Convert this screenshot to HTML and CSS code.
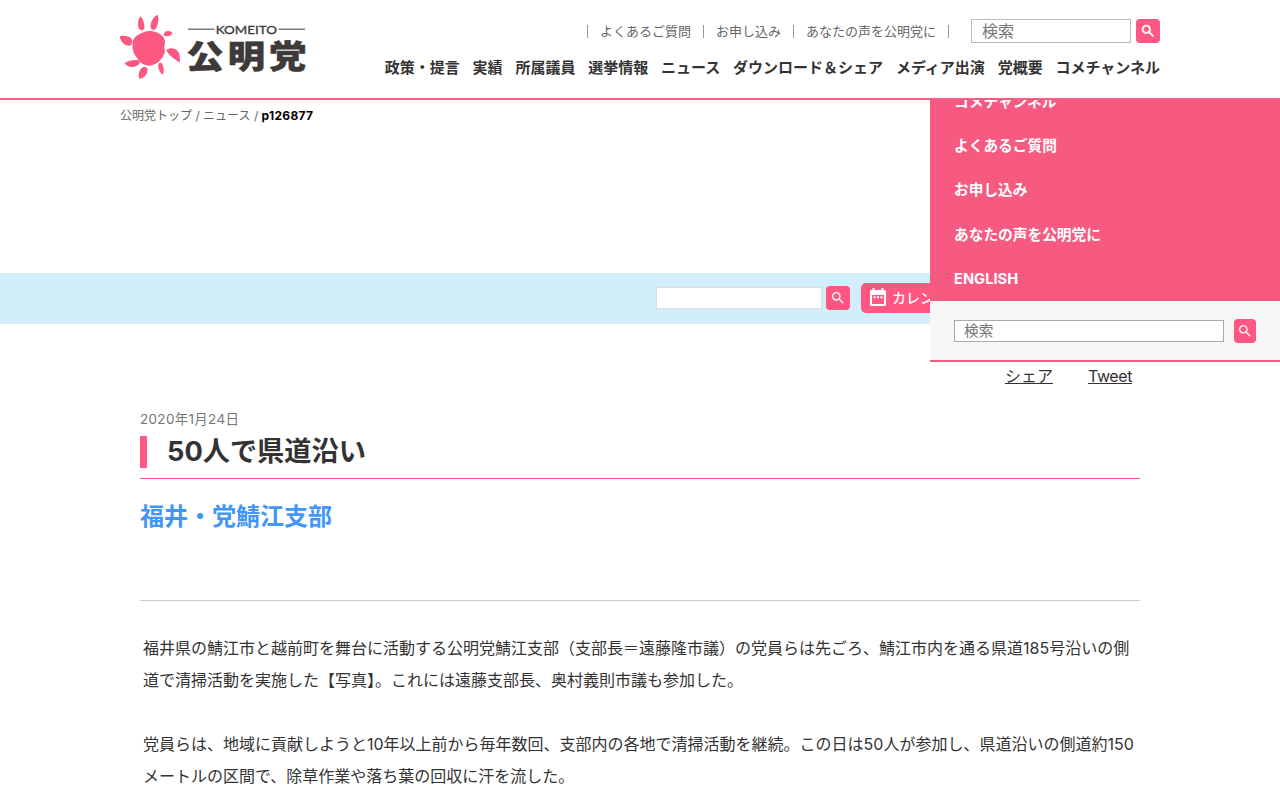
FILE: index.html
```html
<!DOCTYPE html>
<html lang="ja">
<head>
    <meta charset="UTF-8">
    <title>50人で県道沿い | 公明党</title>
    <link rel="stylesheet" href="styles.css">
</head>
<body>
    <!-- Header -->
    <header class="header">
        <div class="header-inner">
            <a href="#" class="logo">
                <svg width="186" height="66" viewBox="30 27 558 198">
                    <g fill="#fc5882" transform="translate(15 15)">
                        <path d="M102 63C118 62 134 69 144 80C152 89 151 101 147 112C151 120 151 129 145 137C139 150 123 165 103 167C86 166 74 157 66 143C55 131 51 115 53 98C54 85 66 75 78 70C86 66 93 63 102 63Z"/>
                        <path d="M76 19C83 24 89 40 88 55C84 64 76 63 71 55C67 43 69 28 76 19Z"/>
                        <path d="M128 14C133 26 129 45 122 56C117 62 109 61 107 52C105 38 114 20 128 14Z"/>
                        <path d="M172 70C170 78 158 80 149 78C144 74 148 66 155 64C162 62 169 64 172 70Z"/>
                        <path d="M154 120C163 113 178 112 186 121C195 131 196 146 194 158C182 149 160 137 154 120Z"/>
                        <path d="M130 162C136 156 142 158 143 166C147 176 148 186 143 194C134 188 128 174 130 162Z"/>
                        <path d="M98 177C98 190 90 203 75 207C69 202 70 188 77 177C83 169 94 170 98 177Z"/>
                        <path d="M75 156C72 167 60 172 47 171C39 170 32 165 29 159C39 152 52 149 64 150C70 150 74 152 75 156Z"/>
                        <path d="M14 79C26 75 43 78 50 86C54 94 51 103 45 107C31 110 17 97 14 79Z"/>
                    </g>
                    <path d="M234 72.5H313M506 72.5H585" stroke="#3e3a39" stroke-width="3"/>
                    <text class="logo-en" x="317" y="87" textLength="184" lengthAdjust="spacingAndGlyphs">KOMEITO</text>
                    <text class="logo-ja" x="229 353 477" y="0" transform="translate(0 189) scale(1 .86)">公明党</text>
                </svg>
            </a>
            <div class="header-right">
                <div class="header-sub">
                    <ul class="sub-nav">
                        <li><a href="#">よくあるご質問</a></li>
                        <li><a href="#">お申し込み</a></li>
                        <li><a href="#">あなたの声を公明党に</a></li>
                    </ul>
                    <form class="search">
                        <input type="text" placeholder="検索">
                        <button type="button" class="search-btn">
                            <svg width="16" height="16" viewBox="0 0 24 24"><path fill="#fff" stroke="#fff" d="M15.5 14h-.79l-.28-.27A6.47 6.47 0 0 0 16 9.5 6.5 6.5 0 1 0 9.5 16c1.61 0 3.09-.59 4.23-1.57l.27.28v.79l5 4.99L20.49 19l-4.99-5zm-6 0C7.01 14 5 11.99 5 9.5S7.01 5 9.5 5 14 7.01 14 9.5 11.99 14 9.5 14z"/></svg>
                        </button>
                    </form>
                </div>
                <nav class="main-nav">
                    <a href="#">政策・提言</a>
                    <a href="#">実績</a>
                    <a href="#">所属議員</a>
                    <a href="#">選挙情報</a>
                    <a href="#">ニュース</a>
                    <a href="#">ダウンロード＆シェア</a>
                    <a href="#">メディア出演</a>
                    <a href="#">党概要</a>
                    <a href="#">コメチャンネル</a>
                </nav>
            </div>
        </div>
    </header>

    <!-- Slide menu -->
    <div class="menu">
        <ul class="menu-list">
            <li><a href="#">コメチャンネル</a></li>
            <li><a href="#">よくあるご質問</a></li>
            <li><a href="#">お申し込み</a></li>
            <li><a href="#">あなたの声を公明党に</a></li>
            <li><a href="#">ENGLISH</a></li>
        </ul>
        <form class="menu-search">
            <input type="text" placeholder="検索">
            <button type="button" class="search-btn">
                <svg width="16" height="16" viewBox="0 0 24 24"><path fill="#fff" d="M15.5 14h-.79l-.28-.27A6.47 6.47 0 0 0 16 9.5 6.5 6.5 0 1 0 9.5 16c1.61 0 3.09-.59 4.23-1.57l.27.28v.79l5 4.99L20.49 19l-4.99-5zm-6 0C7.01 14 5 11.99 5 9.5S7.01 5 9.5 5 14 7.01 14 9.5 11.99 14 9.5 14z"/></svg>
            </button>
        </form>
    </div>

    <div class="breadcrumb">
        <a href="#">公明党トップ</a> / <a href="#">ニュース</a> / <strong>p126877</strong>
    </div>

    <!-- News search bar -->
    <div class="news-bar">
        <div class="news-bar-inner">
            <input type="text">
            <button type="button" class="search-btn">
                <svg width="16" height="16" viewBox="0 0 24 24"><path fill="#fff" d="M15.5 14h-.79l-.28-.27A6.47 6.47 0 0 0 16 9.5 6.5 6.5 0 1 0 9.5 16c1.61 0 3.09-.59 4.23-1.57l.27.28v.79l5 4.99L20.49 19l-4.99-5zm-6 0C7.01 14 5 11.99 5 9.5S7.01 5 9.5 5 14 7.01 14 9.5 11.99 14 9.5 14z"/></svg>
            </button>
            <a href="#" class="calendar-btn">
                <svg width="16" height="18" viewBox="0 0 16 18"><path fill="#fff" fill-rule="evenodd" d="M2.500 0h2v2h7V0h2v2h1a1.500 1.500 0 0 1 1.500 1.500v13a1.500 1.500 0 0 1-1.500 1.500h-13A1.500 1.500 0 0 1 0 16.500v-13A1.500 1.500 0 0 1 1.500 2h1zM2 7v9h12V7zM3.500 8.200h2v2h-2zm3.500 0h2v2H7zm3.500 0h2v2h-2z"/></svg>
                カレンダー
            </a>
        </div>
    </div>

    <main class="article">
        <div class="share">
            <a href="#">シェア</a>
            <a href="#" class="tweet">Tweet</a>
        </div>
        <p class="date">2020年1月24日</p>
        <h1>50人で県道沿い</h1>
        <h2>福井・党鯖江支部</h2>
        <div class="article-body">
            <p>福井県の鯖江市と越前町を舞台に活動する公明党鯖江支部（支部長＝遠藤隆市議）の党員らは先ごろ、鯖江市内を通る県道185号沿いの側道で清掃活動を実施した【写真】。これには遠藤支部長、奥村義則市議も参加した。</p>
            <p>党員らは、地域に貢献しようと10年以上前から毎年数回、支部内の各地で清掃活動を継続。この日は50人が参加し、県道沿いの側道約150メートルの区間で、除草作業や落ち葉の回収に汗を流した。</p>
        </div>
    </main>
</body>
</html>
```
FILE: styles.css
```css
* {
    box-sizing: border-box;
}
body {
    margin: 0;
    height: 800px;
    overflow: hidden;
    background: #fff;
    color: #333;
    font-family: Inter, 'Noto Sans CJK JP', sans-serif;
    font-size: 16px;
}
a {
    color: inherit;
    text-decoration: none;
}
ul {
    list-style: none;
    margin: 0;
    padding: 0;
}
input {
    border: 1px solid #bbb;
    border-radius: 0;
    background: #fff;
    font-family: inherit;
    font-size: 16px;
    padding: 0 10px;
}
input::placeholder {
    color: #757575;
}

/* header */
.header {
    height: 100px;
    border-bottom: 2px solid #f75a82;
}
.header-inner {
    width: 1040px;
    margin: 0 auto;
    display: flex;
    justify-content: space-between;
}
.logo {
    padding-top: 14px;
}
.logo svg {
    display: block;
}
.logo-en {
    font-family: Lato, sans-serif;
    font-size: 37px;
    fill: #3e3a39;
    stroke: #3e3a39;
    stroke-width: 1px;
}
.logo-ja {
    font-family: 'Noto Sans CJK JP', sans-serif;
    font-size: 112px;
    font-weight: 900;
    fill: #3e3a39;
    stroke: #3e3a39;
    stroke-width: 2px;
}
.header-right {
    padding-top: 19px;
}
.header-sub {
    display: flex;
    justify-content: flex-end;
    align-items: center;
    height: 24px;
}
.sub-nav {
    display: flex;
    border-left: 1px solid #999;
    margin-right: 22px;
    font-size: 13px;
    line-height: 13px;
    color: #666;
}
.sub-nav li {
    padding: 0 12px;
    border-right: 1px solid #999;
}
.sub-nav a {
    display: block;
}
.search {
    display: flex;
    gap: 5px;
}
.search input {
    width: 160px;
    height: 24px;
}
.search-btn {
    display: flex;
    align-items: center;
    justify-content: center;
    flex: none;
    width: 24px;
    height: 24px;
    padding: 0;
    border: 0;
    border-radius: 4px;
    background: #ff5682;
}
.main-nav {
    display: flex;
    gap: 12.8px;
    margin-top: 14px;
    font-size: 15px;
    font-weight: bold;
    line-height: 22px;
    white-space: nowrap;
}

/* slide menu */
.menu {
    position: absolute;
    top: 100px;
    right: 0;
    width: 350px;
    height: 262px;
    overflow: hidden;
    display: flex;
    flex-direction: column;
    justify-content: flex-end;
    background: #f65a80;
    border-bottom: 2px solid #f65a80;
}
.menu-list {
    padding: 0 24px;
    color: #fff;
    font-size: 14.7px;
    font-weight: bold;
    line-height: 44.4px;
}
.menu-list a {
    display: block;
    height: 44.4px;
    padding-top: 0.6px;
}
.menu-search {
    display: flex;
    flex: none;
    align-items: center;
    gap: 10px;
    height: 59px;
    padding: 0 24px;
    background: #f7f7f7;
}
.menu-search input {
    flex: 1;
    height: 22px;
    font-size: 14.7px;
    padding: 0 9px;
    border-color: #aaa;
}
.menu-search .search-btn {
    width: 22px;
}

.breadcrumb {
    width: 1040px;
    height: 173px;
    margin: 0 auto;
    padding-top: 7px;
    font-size: 12px;
    line-height: 18px;
    color: #666;
}
.breadcrumb strong {
    color: #000;
    letter-spacing: 0.3px;
}

/* news search bar */
.news-bar {
    height: 51px;
    background: #d2eefb;
}
.news-bar-inner {
    width: 1040px;
    height: 50px;
    margin: 0 auto;
    padding-left: 536px;
    display: flex;
    align-items: center;
}
.news-bar input {
    width: 166px;
    height: 22px;
    margin-right: 4px;
    border-color: #ddd;
}
.calendar-btn {
    display: flex;
    align-items: center;
    gap: 6px;
    width: 110px;
    height: 30px;
    margin-left: 11px;
    padding: 0 0 2px 9px;
    border-radius: 5px;
    background: #ff5682;
    color: #fff;
    font-size: 14px;
    font-weight: 500;
}

/* article */
.article {
    width: 1000px;
    margin: 0 auto;
}
.share {
    display: flex;
    justify-content: flex-end;
    gap: 35px;
    padding: 40px 8px 0 0;
    line-height: 24px;
}
.share a {
    text-decoration: underline;
}
.share .tweet {
    letter-spacing: -0.4px;
}
.date {
    margin: 21px 0 7px;
    font-size: 13.5px;
    line-height: 20px;
    letter-spacing: 0.3px;
    color: #777;
}
h1 {
    display: flex;
    align-items: center;
    gap: 20px;
    margin: 0;
    padding-bottom: 10px;
    border-bottom: 1px solid #ff5682;
    font-size: 27.2px;
    line-height: 32px;
}
h1::before {
    content: "";
    width: 7px;
    height: 32px;
    border-radius: 1px;
    background: #ff5682;
}
h2 {
    margin: 0;
    height: 122px;
    padding-top: 20px;
    border-bottom: 1px solid #ccc;
    font-size: 24px;
    line-height: 36px;
    color: #4296f5;
}
.article-body {
    padding: 31px 4px 0 3px;
    line-height: 32px;
}
.article-body p {
    margin: 0 0 32px;
}
```
